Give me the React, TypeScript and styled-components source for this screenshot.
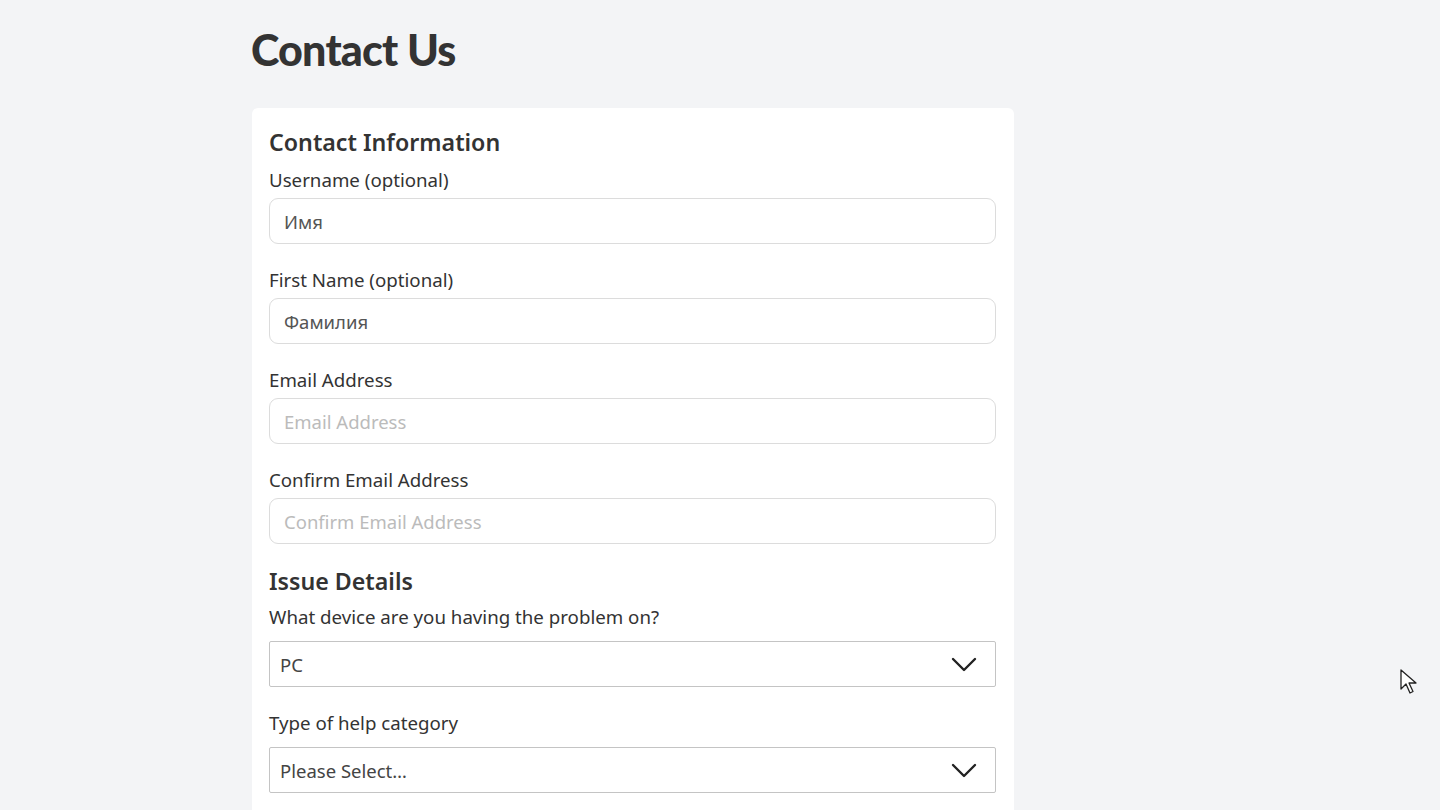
import styled, { createGlobalStyle } from "styled-components"

const GlobalStyle = createGlobalStyle`
  html, body {
    margin: 0;
    background: #f3f4f6;
    font-family: "Noto Sans", "Open Sans", sans-serif;
    color: #333;
    overflow: hidden;
  }
`

const Page = styled.main`
  width: 938px;
  margin: 0 auto;
  padding-top: 22px;
`

const Title = styled.h1`
  margin: 0 0 30px;
  font-family: "Lato", sans-serif;
  font-weight: 900;
  font-size: 43px;
  line-height: 56px;
  color: #333;
  letter-spacing: -0.8px;
`

const Card = styled.section`
  width: 762px;
  box-sizing: border-box;
  background: #fff;
  border-radius: 6px;
  padding: 16px 18px 40px 17px;
  margin-left: 1px;
`

const SectionTitle = styled.h2<{ $lh: number; $below: number }>`
  margin: 0 0 ${(p) => p.$below}px;
  font-size: 23.2px;
  line-height: ${(p) => p.$lh}px;
  font-weight: 600;
  color: #333;
`

const Field = styled.div`
  display: flex;
  flex-direction: column;
  margin-bottom: 22px;
`

const Label = styled.label<{ $gap: number }>`
  font-size: 18.7px;
  line-height: 28px;
  color: #333;
  margin-bottom: ${(p) => p.$gap}px;
`

const TextInput = styled.input`
  height: 46px;
  box-sizing: border-box;
  border: 1.5px solid #dcdcdc;
  border-radius: 9px;
  padding: 0 14px;
  font-family: inherit;
  font-size: 18.5px;
  color: #555;
  background: #fff;
  outline: none;

  &::placeholder {
    color: #bbb;
  }
`

const SelectBox = styled.div`
  height: 46px;
  box-sizing: border-box;
  border: 1.5px solid #c4c4c4;
  border-radius: 2px;
  display: flex;
  align-items: center;
  justify-content: space-between;
  padding: 0 18px 0 10px;
  font-size: 18.5px;
  color: #444;
`

const Chevron = () => (
  <svg width="26" height="16" viewBox="0 0 26 16" fill="none">
    <path d="M2 3l11 11L24 3" stroke="#222" strokeWidth="2.4" strokeLinecap="round" strokeLinejoin="round" />
  </svg>
)

const Cursor = styled.svg`
  position: absolute;
  left: 1400px;
  top: 669px;
`

type InputProps = { label: string; placeholder: string; filled?: boolean }

function InputField({ label, placeholder, filled }: InputProps) {
  return (
    <Field>
      <Label $gap={4}>{label}</Label>
      {filled ? (
        <TextInput defaultValue={placeholder} />
      ) : (
        <TextInput placeholder={placeholder} />
      )}
    </Field>
  )
}

function SelectField({ label, value }: { label: string; value: string }) {
  return (
    <Field>
      <Label $gap={10}>{label}</Label>
      <SelectBox>
        <span>{value}</span>
        <Chevron />
      </SelectBox>
    </Field>
  )
}

export default function App() {
  return (
    <>
      <GlobalStyle />
      <Page>
        <Title>Contact Us</Title>
        <Card>
          <SectionTitle $lh={36} $below={6}>Contact Information</SectionTitle>
          <InputField label="Username (optional)" placeholder="Имя" filled />
          <InputField label="First Name (optional)" placeholder="Фамилия" filled />
          <InputField label="Email Address" placeholder="Email Address" />
          <InputField label="Confirm Email Address" placeholder="Confirm Email Address" />
          <SectionTitle $lh={30} $below={7}>Issue Details</SectionTitle>
          <SelectField label="What device are you having the problem on?" value="PC" />
          <SelectField label="Type of help category" value="Please Select…" />
        </Card>
      </Page>
      <Cursor width="18" height="26" viewBox="0 0 18 26">
        <path d="M1 1v19l5-5 4 9 3-1.5-4-8.5h7z" fill="#fff" stroke="#222" strokeWidth="1.3" strokeLinejoin="round" />
      </Cursor>
    </>
  )
}
